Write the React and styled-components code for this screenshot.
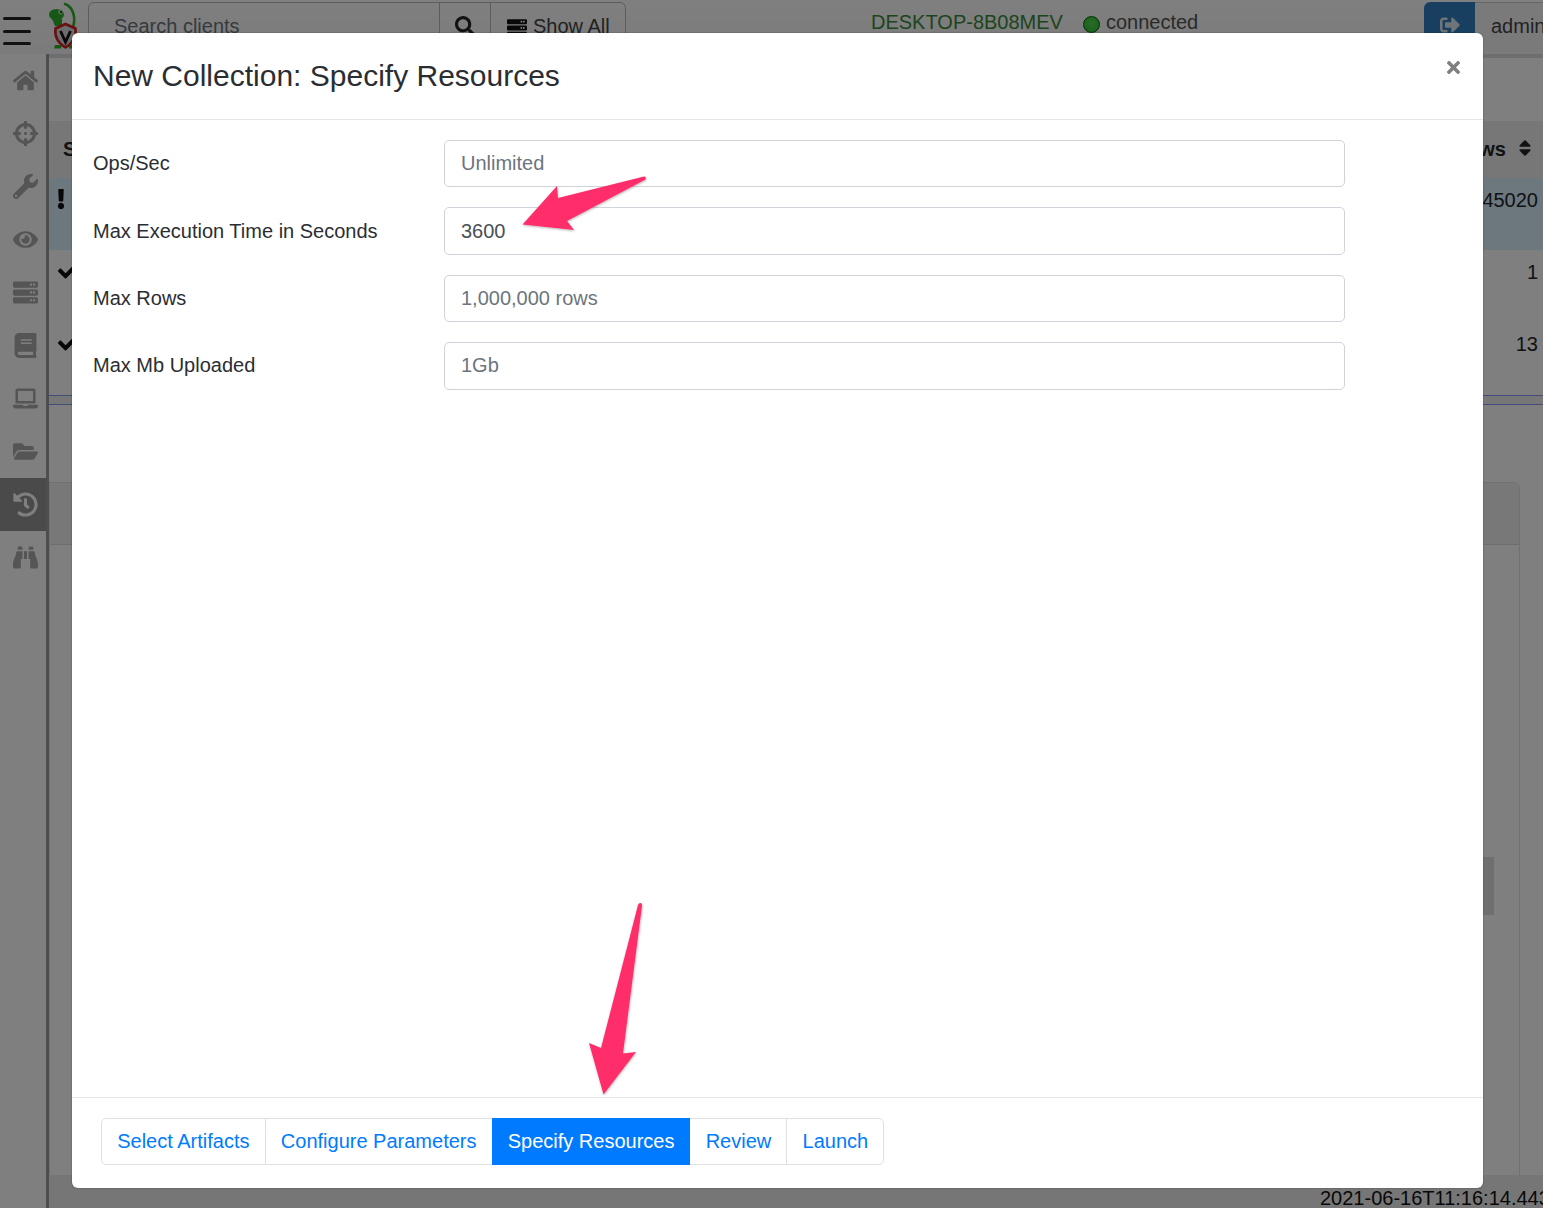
import React from "react";
import styled, { createGlobalStyle } from "styled-components";
import {
  FaHome, FaCrosshairs, FaWrench, FaEye, FaServer, FaBook, FaLaptop, FaFolderOpen,
  FaHistory, FaBinoculars, FaSearch, FaSignOutAlt, FaSort, FaCheck, FaExclamation, FaTimes,
} from "react-icons/fa";

const Global = createGlobalStyle`
  html, body { margin: 0; padding: 0; background: #fff; }
  * { box-sizing: border-box; }
  body { font-family: "Liberation Sans", Arial, sans-serif; font-size: 20px; color: #212529; }
`;

const Page = styled.div`
  position: relative;
  width: 1543px;
  height: 1208px;
  overflow: hidden;
  background: #fff;
  display: flex;
  flex-direction: column;
`;

const Topbar = styled.header`
  height: 54px;
  flex: none;
  display: flex;
  align-items: flex-start;
  padding-top: 2px;
  background: linear-gradient(#fff, #f6f6f6);
`;
const Burger = styled.div`
  width: 46px;
  padding: 15px 0 0 3px;
  display: flex;
  flex-direction: column;
  gap: 9.5px;
  flex: none;
`;
const BurgerLine = styled.span`
  display: block;
  width: 28px;
  height: 3px;
  border-radius: 2px;
  background: #222;
`;
const Logo = styled.svg`
  width: 34px;
  height: 50px;
  margin: 0 8px 0 0;
  flex: none;
`;
const SearchGroup = styled.div`
  display: flex;
  height: 48px;
  width: 538px;
  border: 1px solid #bbb;
  border-radius: 6px;
  flex: none;
`;
const SearchField = styled.div`
  width: 351px;
  padding: 11px 0 0 25px;
  color: #6c757d;
  line-height: 24px;
  border-right: 1px solid #bbb;
`;
const SearchButton = styled.div`
  width: 51px;
  display: flex;
  justify-content: center;
  padding-top: 13px;
  color: #212529;
  border-right: 1px solid #bbb;
  font-size: 20px;
`;
const ShowAll = styled.div`
  flex: 1;
  display: flex;
  gap: 6px;
  padding: 11px 0 0 16px;
  line-height: 24px;
  color: #444;
  svg { margin-top: 4px; color: #111; }
`;
const Status = styled.div`
  display: flex;
  align-items: center;
  margin-left: 245px;
  height: 40px;
  width: 553px;
  flex: none;
`;
const HostName = styled.span`
  color: #3a8a3a;
  margin-right: 20px;
`;
const Dot = styled.span`
  width: 17px;
  height: 17px;
  border-radius: 50%;
  background: radial-gradient(circle at 50% 40%, #4fdc4f, #2fb82f);
  border: 1px solid #0c5c0c;
  margin: 4px 6px 0 0;
`;
const ConnText = styled.span`
  color: #555;
`;
const LogoutButton = styled.div`
  width: 51px;
  height: 48px;
  flex: none;
  background: #337fc0;
  border-radius: 6px 0 0 0;
  color: #dfe8f0;
  display: flex;
  justify-content: center;
  padding-top: 13px;
  font-size: 20px;
`;
const UserName = styled.div`
  padding: 11px 0 0 16px;
  line-height: 24px;
  color: #444;
  white-space: nowrap;
  flex: 1;
  height: 48px;
  background: #f4f4f4;
  border-top: 1px solid #ccc;
`;

const Body = styled.div`
  flex: 1;
  display: flex;
  min-height: 0;
`;
const Sidebar = styled.nav`
  width: 49px;
  flex: none;
  border-right: 3px solid #9c9c9c;
  display: flex;
  flex-direction: column;
`;
const NavItem = styled.div`
  height: 53px;
  display: flex;
  align-items: center;
  justify-content: center;
  padding-left: 4px;
  font-size: 25px;
  color: ${(p) => (p.$active ? "#fff" : "#aaa")};
  background: ${(p) => (p.$active ? "#949494" : "transparent")};
`;

const Main = styled.main`
  flex: 1;
  min-width: 0;
  display: flex;
  flex-direction: column;
`;
const TopRule = styled.div`
  height: 4px;
  flex: none;
  margin-bottom: 63px;
  background: #dcdcdc;
`;
const TableHead = styled.div`
  height: 57px;
  flex: none;
  display: flex;
  align-items: center;
  justify-content: space-between;
  padding: 0 8px 0 14px;
  background: #eee;
  font-weight: 700;
  svg { margin-left: 9px; vertical-align: -2px; }
`;
const Row = styled.div`
  height: ${(p) => p.$h}px;
  flex: none;
  display: flex;
  align-items: flex-start;
  justify-content: space-between;
  padding: ${(p) => p.$top}px 5px 0 9px;
  background: ${(p) => (p.$selected ? "#d8eefc" : "transparent")};
  line-height: 24px;
  svg { color: #111; font-size: 20px; margin-top: 1px; }
`;
const AlertIcon = styled(FaExclamation)`
  font-size: 20px;
  margin-left: -7px;
`;
const Divider = styled.div`
  height: 10px;
  flex: none;
  background: #efefef;
  border-top: 1px solid #7f9cf5;
  border-bottom: 1px solid #7f9cf5;
`;
const Lower = styled.div`
  flex: 1;
  min-height: 0;
  padding: 77px 23px 0 0;
  display: flex;
  flex-direction: column;
`;
const Card = styled.section`
  flex: 1;
  border: 1px solid #e0e0e0;
  border-bottom: none;
  border-radius: 0 6px 0 0;
  display: flex;
  flex-direction: column;
`;
const CardHead = styled.div`
  height: 62px;
  flex: none;
  background: #f1f1f1;
  border-bottom: 1px solid #ddd;
`;
const CardBody = styled.div`
  flex: 1;
  padding: 312px 25px 0 0;
  display: flex;
  justify-content: flex-end;
`;
const ScrollBlock = styled.div`
  width: 60px;
  height: 58px;
  background: #dedede;
`;
const Footer = styled.footer`
  height: 33px;
  flex: none;
  background: #ececec;
  padding: 13px 0 0 1271px;
  line-height: 20px;
  white-space: nowrap;
  color: #111;
`;

const Overlay = styled.div`
  position: absolute;
  inset: 0;
  background: rgba(0, 0, 0, 0.5);
`;
const Modal = styled.div`
  position: absolute;
  left: 72px;
  top: 33px;
  width: 1411px;
  height: 1155px;
  background: #fff;
  border-radius: 6px;
  box-shadow: 0 0 2px rgba(0, 0, 0, 0.35);
  display: flex;
  flex-direction: column;
`;
const ModalHeader = styled.div`
  height: 87px;
  flex: none;
  border-bottom: 1.5px solid #e4e6e8;
  display: flex;
  justify-content: space-between;
  padding: 24px 20px 0 21px;
`;
const Title = styled.h5`
  margin: 0;
  font-weight: 400;
  font-size: 30px;
  line-height: 38px;
  color: #2a2e33;
`;
const Close = styled.div`
  color: #7f7f7f;
  font-size: 19px;
  line-height: 1;
  margin: 1px 0 0 0;
`;
const ModalBody = styled.div`
  flex: 1;
  padding: 20px 138px 0 21px;
  display: flex;
  flex-direction: column;
  gap: 20px;
`;
const FormRow = styled.div`
  display: flex;
  align-items: center;
`;
const Label = styled.label`
  width: 351px;
  flex: none;
  color: #2a2e33;
`;
const Field = styled.input`
  flex: 1;
  height: 47.4px;
  padding: 0 16px;
  border: 1px solid #ced4da;
  border-radius: 5px;
  font: inherit;
  color: #495057;
  background: #fff;
  &::placeholder { color: #6c757d; opacity: 1; }
`;
const ModalFooter = styled.div`
  height: 91px;
  flex: none;
  border-top: 1.5px solid #e4e6e8;
  padding: 20px 29px;
`;
const Steps = styled.div`
  display: inline-flex;
  height: 47px;
  border: 1px solid #dee2e6;
  border-radius: 5px;
`;
const Step = styled.div`
  padding: 0 15.2px;
  line-height: 44px;
  color: #007bff;
  border-left: ${(p) => (p.$divider ? "1px solid #dee2e6" : "none")};
`;
const ActiveStep = styled.div`
  padding: 0 16px;
  margin: -1px 0;
  line-height: 46px;
  color: #fff;
  background: #007bff;
`;
const Arrow = styled.svg`
  position: absolute;
  left: 0;
  top: 0;
  width: 1543px;
  height: 1208px;
  pointer-events: none;
`;

const navIcons = [FaHome, FaCrosshairs, FaWrench, FaEye, FaServer, FaBook, FaLaptop, FaFolderOpen, FaHistory, FaBinoculars];
const fields = [
  { label: "Ops/Sec", placeholder: "Unlimited" },
  { label: "Max Execution Time in Seconds", value: "3600" },
  { label: "Max Rows", placeholder: "1,000,000 rows" },
  { label: "Max Mb Uploaded", placeholder: "1Gb" },
];

export default function App() {
  return (
    <Page>
      <Global />
      <Topbar>
        <Burger>
          <BurgerLine />
          <BurgerLine />
          <BurgerLine />
        </Burger>
        <Logo viewBox="0 0 34 50">
          <path d="M19 2 C27 5 31 16 26 28" fill="none" stroke="#2fb02f" strokeWidth="2.6" strokeLinecap="round" />
          <ellipse cx="10.5" cy="12.5" rx="7.5" ry="5.5" fill="#2fb02f" />
          <circle cx="14.6" cy="10" r="2.4" fill="#9fe89f" />
          <circle cx="15" cy="10" r="1" fill="#111" />
          <path d="M6 17 H16 V24 H9 Z" fill="#2fb02f" />
          <path d="M9 43 H16 L15 46.5 H8 Z M23 43 H29 L28 46.5 H23 Z" fill="#2fb02f" />
          <path d="M19.5 22 L29.5 26.5 C30.5 34 27 41 19.5 45.5 C12 41 8.5 34 9.5 26.5 Z" fill="#d8d8d8" stroke="#d42020" strokeWidth="2.6" />
          <path d="M14.5 29 L19.5 40 L24.5 29" fill="none" stroke="#111" strokeWidth="2.8" />
        </Logo>
        <SearchGroup>
          <SearchField>Search clients</SearchField>
          <SearchButton><FaSearch /></SearchButton>
          <ShowAll><FaServer />Show All</ShowAll>
        </SearchGroup>
        <Status>
          <HostName>DESKTOP-8B08MEV</HostName>
          <Dot />
          <ConnText>connected</ConnText>
        </Status>
        <LogoutButton><FaSignOutAlt /></LogoutButton>
        <UserName>admin</UserName>
      </Topbar>
      <Body>
        <Sidebar>
          {navIcons.map((Icon, i) => (
            <NavItem key={i} $active={i === 8}><Icon /></NavItem>
          ))}
        </Sidebar>
        <Main>
          <TopRule />
          <TableHead>
            <span>State</span>
            <span>Rows<FaSort /></span>
          </TableHead>
          <Row $h={72} $selected $top={10}>
            <AlertIcon />
            <span>45020</span>
          </Row>
          <Row $h={72} $top={10}>
            <FaCheck />
            <span>1</span>
          </Row>
          <Row $h={73} $top={10}>
            <FaCheck />
            <span>13</span>
          </Row>
          <Divider />
          <Lower>
            <Card>
              <CardHead />
              <CardBody><ScrollBlock /></CardBody>
            </Card>
          </Lower>
          <Footer>2021-06-16T11:16:14.443Z</Footer>
        </Main>
      </Body>
      <Overlay />
      <Modal>
        <ModalHeader>
          <Title>New Collection: Specify Resources</Title>
          <Close><FaTimes /></Close>
        </ModalHeader>
        <ModalBody>
          {fields.map((f) => (
            <FormRow key={f.label}>
              <Label>{f.label}</Label>
              <Field placeholder={f.placeholder} defaultValue={f.value} />
            </FormRow>
          ))}
        </ModalBody>
        <ModalFooter>
          <Steps>
            <Step>Select Artifacts</Step>
            <Step $divider>Configure Parameters</Step>
            <ActiveStep>Specify Resources</ActiveStep>
            <Step>Review</Step>
            <Step $divider>Launch</Step>
          </Steps>
        </ModalFooter>
      </Modal>
      <Arrow viewBox="0 0 1543 1208">
        <defs>
          <filter id="arrowShadow" x="-10%" y="-10%" width="120%" height="120%">
            <feDropShadow dx="0.5" dy="1" stdDeviation="0.8" floodColor="#000" floodOpacity="0.3" />
          </filter>
        </defs>
        <g fill="#ff2d6b" filter="url(#arrowShadow)">
          <path d="M644 176.5 L558 198 L557 186 L522.5 224.5 L574 230 L567 221 L645.5 179.5 Q646.5 176.5 644 176.5 Z" />
          <path d="M640.5 903 Q638.5 903 638 905 L601 1048 L589 1043 L603.5 1094.5 L636 1052 L623 1053.5 L642 906 Q642 903 640.5 903 Z" />
        </g>
      </Arrow>
    </Page>
  );
}
